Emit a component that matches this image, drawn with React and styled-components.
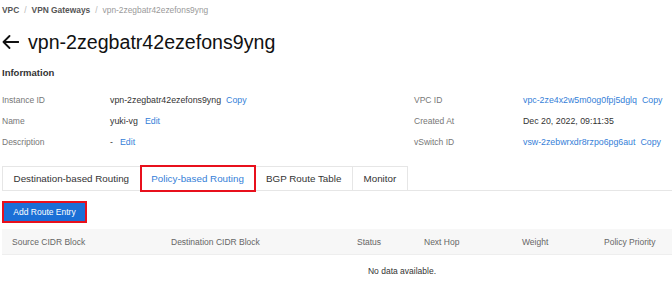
import styled, { createGlobalStyle } from 'styled-components';

const GlobalStyle = createGlobalStyle`
  html, body {
    margin: 0;
    padding: 0;
    background: #fff;
    overflow: hidden;
  }
  body {
    font-family: "Liberation Sans", Arial, sans-serif;
    color: #333;
  }
`

const Page = styled.div`
  padding: 0 0 0 2px;
  width: 670px;
`

const Breadcrumb = styled.div`
  display: flex;
  align-items: center;
  gap: 5px;
  height: 20px;
  font-size: 8.4px;
`

const Crumb = styled.span`
  color: ${({ current }) => (current ? '#9a9a9a' : '#555')};
  font-weight: ${({ current }) => (current ? 400 : 700)};
`

const Slash = styled.span`
  color: #b5b5b5;
`

const TitleRow = styled.div`
  display: flex;
  align-items: center;
  gap: 9px;
  height: 28px;
  margin-top: 8px;
`

const Title = styled.h1`
  margin: 0;
  font-size: 19.6px;
  font-weight: 400;
  color: #111;
`

const SectionTitle = styled.div`
  margin-top: 7px;
  height: 20px;
  line-height: 20px;
  font-size: 9.5px;
  font-weight: 700;
  color: #333;
`

const InfoGrid = styled.div`
  display: grid;
  grid-template-columns: 108px 304px 109px 1fr;
  grid-auto-rows: 21px;
  align-items: center;
  margin-top: 6px;
`

const Label = styled.div`
  font-size: 8.5px;
  color: #777;
`

const Value = styled.div`
  font-size: 8.8px;
  color: #333;
  white-space: nowrap;
`

const Link = styled.span`
  color: #3580d8;
  margin-left: ${({ gap }) => gap || 0}px;
  cursor: pointer;
`

const Tabs = styled.div`
  display: flex;
  margin-top: 14px;
  height: 25px;
  box-sizing: border-box;
  border-bottom: 1px solid #e6e6e6;
`

const Tab = styled.div`
  display: flex;
  align-items: center;
  padding: 0 10.6px;
  height: 25px;
  box-sizing: border-box;
  font-size: 9.8px;
  border: 1px solid #e6e6e6;
  border-left-width: ${({ first }) => (first ? 1 : 0)}px;
  border-bottom-color: ${({ active }) => (active ? '#fff' : '#e6e6e6')};
  color: ${({ active }) => (active ? '#3580d8' : '#333')};
  background: #fff;
  outline: ${({ active }) => (active ? '2px solid #e8101c' : 'none')};
  outline-offset: -1px;
  position: relative;
  z-index: ${({ active }) => (active ? 1 : 0)};
`

const Toolbar = styled.div`
  display: flex;
  padding: 12px 0 0 2px;
`

const PrimaryButton = styled.button`
  height: 18px;
  width: 81px;
  padding: 0;
  border: none;
  background: #1b6fd6;
  color: #fff;
  font-family: inherit;
  font-size: 8.5px;
  outline: 2px solid #e8101c;
  cursor: pointer;
`

const Table = styled.div`
  margin-top: 8px;
`

const HeaderRow = styled.div`
  display: grid;
  grid-template-columns: 159px 186px 67px 98px 82px 1fr;
  height: 26px;
  box-sizing: border-box;
  align-items: center;
  background: #f7f7f7;
  border-bottom: 1px solid #eeeeee;
`

const HeadCell = styled.div`
  padding-left: 10px;
  font-size: 8.5px;
  color: #666;
  white-space: nowrap;
`

const EmptyRow = styled.div`
  height: 32px;
  display: flex;
  align-items: center;
  justify-content: center;
  padding-left: 130px;
  font-size: 8.5px;
  color: #333;
`

const BackArrow = () => (
  <svg width="17" height="14" viewBox="0 0 17 14" fill="none">
    <path d="M1.5 7H16.5M7.5 1L1.5 7L7.5 13" stroke="#111" strokeWidth="1.8" strokeLinecap="round" strokeLinejoin="round" />
  </svg>
)

const columns = ['Source CIDR Block', 'Destination CIDR Block', 'Status', 'Next Hop', 'Weight', 'Policy Priority'];

export default function App() {
  const id = 'vpn-2zegbatr42ezefons9yng';

  return (
    <Page>
      <GlobalStyle />
      <Breadcrumb>
        <Crumb>VPC</Crumb>
        <Slash>/</Slash>
        <Crumb>VPN Gateways</Crumb>
        <Slash>/</Slash>
        <Crumb current>{id}</Crumb>
      </Breadcrumb>

      <TitleRow>
        <BackArrow />
        <Title>{id}</Title>
      </TitleRow>

      <SectionTitle>Information</SectionTitle>

      <InfoGrid>
        <Label>Instance ID</Label>
        <Value>{id}<Link gap={5}>Copy</Link></Value>
        <Label>VPC ID</Label>
        <Value><Link>vpc-2ze4x2w5m0og0fpj5dglq</Link><Link gap={5}>Copy</Link></Value>

        <Label>Name</Label>
        <Value>yuki-vg<Link gap={7}>Edit</Link></Value>
        <Label>Created At</Label>
        <Value>Dec 20, 2022, 09:11:35</Value>

        <Label>Description</Label>
        <Value>-<Link gap={7}>Edit</Link></Value>
        <Label>vSwitch ID</Label>
        <Value><Link>vsw-2zebwrxdr8rzpo6pg6aut</Link><Link gap={5}>Copy</Link></Value>
      </InfoGrid>

      <Tabs>
        <Tab first>Destination-based Routing</Tab>
        <Tab active>Policy-based Routing</Tab>
        <Tab>BGP Route Table</Tab>
        <Tab>Monitor</Tab>
      </Tabs>

      <Toolbar>
        <PrimaryButton>Add Route Entry</PrimaryButton>
      </Toolbar>

      <Table>
        <HeaderRow>
          {columns.map((c) => <HeadCell key={c}>{c}</HeadCell>)}
        </HeaderRow>
        <EmptyRow>No data available.</EmptyRow>
      </Table>
    </Page>
  );
}
